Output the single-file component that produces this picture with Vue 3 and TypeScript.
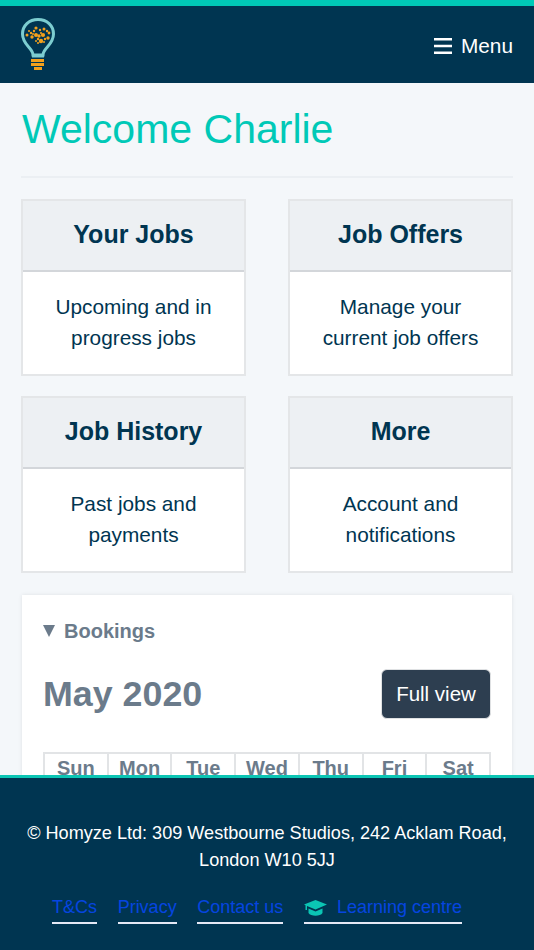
<script setup lang="ts">
interface Card { title: string; lines: string[] }
const cards: Card[] = [
  { title: 'Your Jobs', lines: ['Upcoming and in', 'progress jobs'] },
  { title: 'Job Offers', lines: ['Manage your', 'current job offers'] },
  { title: 'Job History', lines: ['Past jobs and', 'payments'] },
  { title: 'More', lines: ['Account and', 'notifications'] },
]
const days = ['Sun', 'Mon', 'Tue', 'Wed', 'Thu', 'Fri', 'Sat']
const dots: [number, number, number][] = [
  [6, 17, 1.5], [8, 13, 1], [10, 15, 1.2], [11, 19, 1.7], [13, 13, 1.2], [15, 17, 2], [15, 10, 1.6],
  [19, 12, 1.2], [18, 18, 1.7], [20, 15, 1.1], [22, 17, 2.1], [23, 11, 1.5], [26, 13, 1.2], [28, 15, 1.4],
  [27, 20, 1.7], [24, 21, 1.2], [20, 23, 2.2], [17, 21, 1.2], [15, 23, 1], [23, 24, 1], [17, 25, 1], [12, 16, 1],
]
</script>

<template>
  <div class="page">
    <header class="header">
      <svg class="logo" width="34" height="52" viewBox="0 0 34 52" fill="none">
        <path d="M12 37c0-7-10.500-10-10.500-21C1.500 7.500 8 1.500 17 1.500S32.500 7.500 32.500 16C32.500 27 22 30 22 37z" stroke="#7ccdd0" stroke-width="3" />
        <rect x="11" y="37" width="12" height="2.500" fill="#7ccdd0" />
        <rect x="10" y="41" width="13" height="3" fill="#f3a01c" />
        <rect x="10" y="45" width="13" height="3" fill="#f3a01c" />
        <rect x="13" y="49" width="8" height="3" fill="#f3a01c" />
        <circle v-for="(d, i) in dots" :key="i" :cx="d[0]" :cy="d[1]" :r="d[2]" fill="#f3a01c" />
      </svg>
      <div class="menu">
        <svg width="18" height="16" viewBox="0 0 18 16" fill="#fff">
          <rect y="0" width="18" height="2.500" />
          <rect y="6.750" width="18" height="2.500" />
          <rect y="13.500" width="18" height="2.500" />
        </svg>
        <span>Menu</span>
      </div>
    </header>

    <main class="main">
      <h1 class="welcome">Welcome Charlie</h1>
      <div class="rule"></div>
      <section class="grid">
        <article v-for="c in cards" :key="c.title" class="card">
          <h2 class="card-head">{{ c.title }}</h2>
          <p class="card-body"><span v-for="l in c.lines" :key="l" class="line">{{ l }}</span></p>
        </article>
      </section>
      <section class="panel">
        <div class="summary"><span class="tri"></span>Bookings</div>
        <div class="month-row">
          <h2 class="month">May 2020</h2>
          <button class="full">Full view</button>
        </div>
        <div class="days">
          <div v-for="d in days" :key="d" class="day">{{ d }}</div>
        </div>
      </section>
    </main>

    <footer class="footer">
      <p class="copy">© Homyze Ltd: 309 Westbourne Studios, 242 Acklam Road,<br />London W10 5JJ</p>
      <nav class="links">
        <a class="link">T&amp;Cs</a>
        <a class="link">Privacy</a>
        <a class="link">Contact us</a>
        <a class="link learn">
          <svg width="23" height="16" viewBox="0 0 23 16" fill="#0bc5b4">
            <path d="M11.500 0 23 4.500 11.500 9.500 3 6v4H1.500V5.300L0 4.500z" />
            <path d="M4.500 8.500V13c2 3.500 12 3.500 14 0V8.500l-7 3z" />
          </svg>
          <span>Learning centre</span>
        </a>
      </nav>
    </footer>
  </div>
</template>

<style scoped>
.page {
  height: 950px;
  display: flex;
  flex-direction: column;
  overflow: hidden;
  background: #f4f7fa;
  font-family: "Liberation Sans", Arial, sans-serif;
}
.header {
  flex: none;
  height: 75px;
  box-sizing: content-box;
  border-top: 6px solid #00c9b7;
  background: #003551;
  display: flex;
  align-items: center;
  justify-content: space-between;
  padding: 2px 21px 0 21px;
}
.logo { margin-top: -3px; }
.menu {
  display: flex;
  align-items: center;
  gap: 9px;
  color: #fff;
  font-size: 20.800px;
}
.main {
  flex: 1;
  min-height: 0;
  overflow: hidden;
  padding: 0 21px;
}
.welcome {
  margin: 21px 0 0 1px;
  font-size: 41px;
  line-height: 50px;
  font-weight: 400;
  color: #00c9b7;
}
.rule {
  height: 2px;
  margin-top: 22px;
  background: #ebeff3;
}
.grid {
  display: grid;
  grid-template-columns: 225px 225px;
  justify-content: space-between;
  row-gap: 20px;
  margin-top: 21px;
}
.card {
  border: 2px solid #e4e6e8;
  background: #fff;
  display: flex;
  flex-direction: column;
  box-sizing: border-box;
}
.card-head {
  margin: 0;
  height: 71px;
  box-sizing: border-box;
  border-bottom: 2px solid #d3d6da;
  background: #edf0f3;
  color: #003551;
  font-size: 25px;
  font-weight: 700;
  line-height: 67px;
  text-align: center;
}
.card-body {
  margin: 0;
  padding: 19px 10px 21px;
  text-align: center;
  font-size: 20.800px;
  line-height: 31px;
  color: #003551;
}
.line { display: block; }
.panel {
  margin: 22px 1px 0;
  background: #fff;
  box-shadow: 0 0 4px rgba(0, 0, 0, 0.09);
  padding: 24px 21px 0;
  height: 300px;
  box-sizing: border-box;
}
.summary {
  display: flex;
  align-items: center;
  gap: 9px;
  color: #6b7b8b;
  font-size: 20px;
  font-weight: 700;
  line-height: 24px;
}
.tri {
  width: 0;
  height: 0;
  border-left: 6.500px solid transparent;
  border-right: 6.500px solid transparent;
  border-top: 12px solid #6b7b8b;
}
.month-row {
  display: flex;
  align-items: center;
  justify-content: space-between;
  margin-top: 26px;
}
.month {
  margin: 0;
  font-size: 35.800px;
  font-weight: 700;
  color: #6b7b8b;
}
.full {
  width: 110px;
  height: 50px;
  border: 1px solid #dfe1e3;
  border-radius: 6px;
  background: #2d3e50;
  color: #fff;
  font: 400 20.500px "Liberation Sans", Arial, sans-serif;
}
.days {
  display: grid;
  grid-template-columns: repeat(7, 1fr);
  margin-top: 33px;
  border: 2px solid #e2e4e6;
  border-width: 2px 1px 0;
}
.day {
  height: 40px;
  border: solid #e2e4e6;
  border-width: 0 1px;
  text-align: center;
  color: #6b7b8b;
  font-size: 20px;
  font-weight: 700;
  line-height: 28px;
}
.footer {
  flex: none;
  height: 175px;
  box-sizing: border-box;
  border-top: 3px solid #0bc5b4;
  background: #003551;
  padding-top: 42px;
  text-align: center;
  color: #fff;
}
.copy {
  margin: 0;
  font-size: 18.100px;
  line-height: 27px;
}
.links {
  display: flex;
  justify-content: center;
  gap: 20.600px;
  margin-top: 20px;
  padding-right: 20px;
}
.link {
  color: #0645e0;
  font-size: 18px;
  line-height: 27px;
  border-bottom: 2px solid #e4e8f5;
  padding-bottom: 1px;
}
.learn {
  display: flex;
  align-items: center;
  gap: 10px;
}
</style>
